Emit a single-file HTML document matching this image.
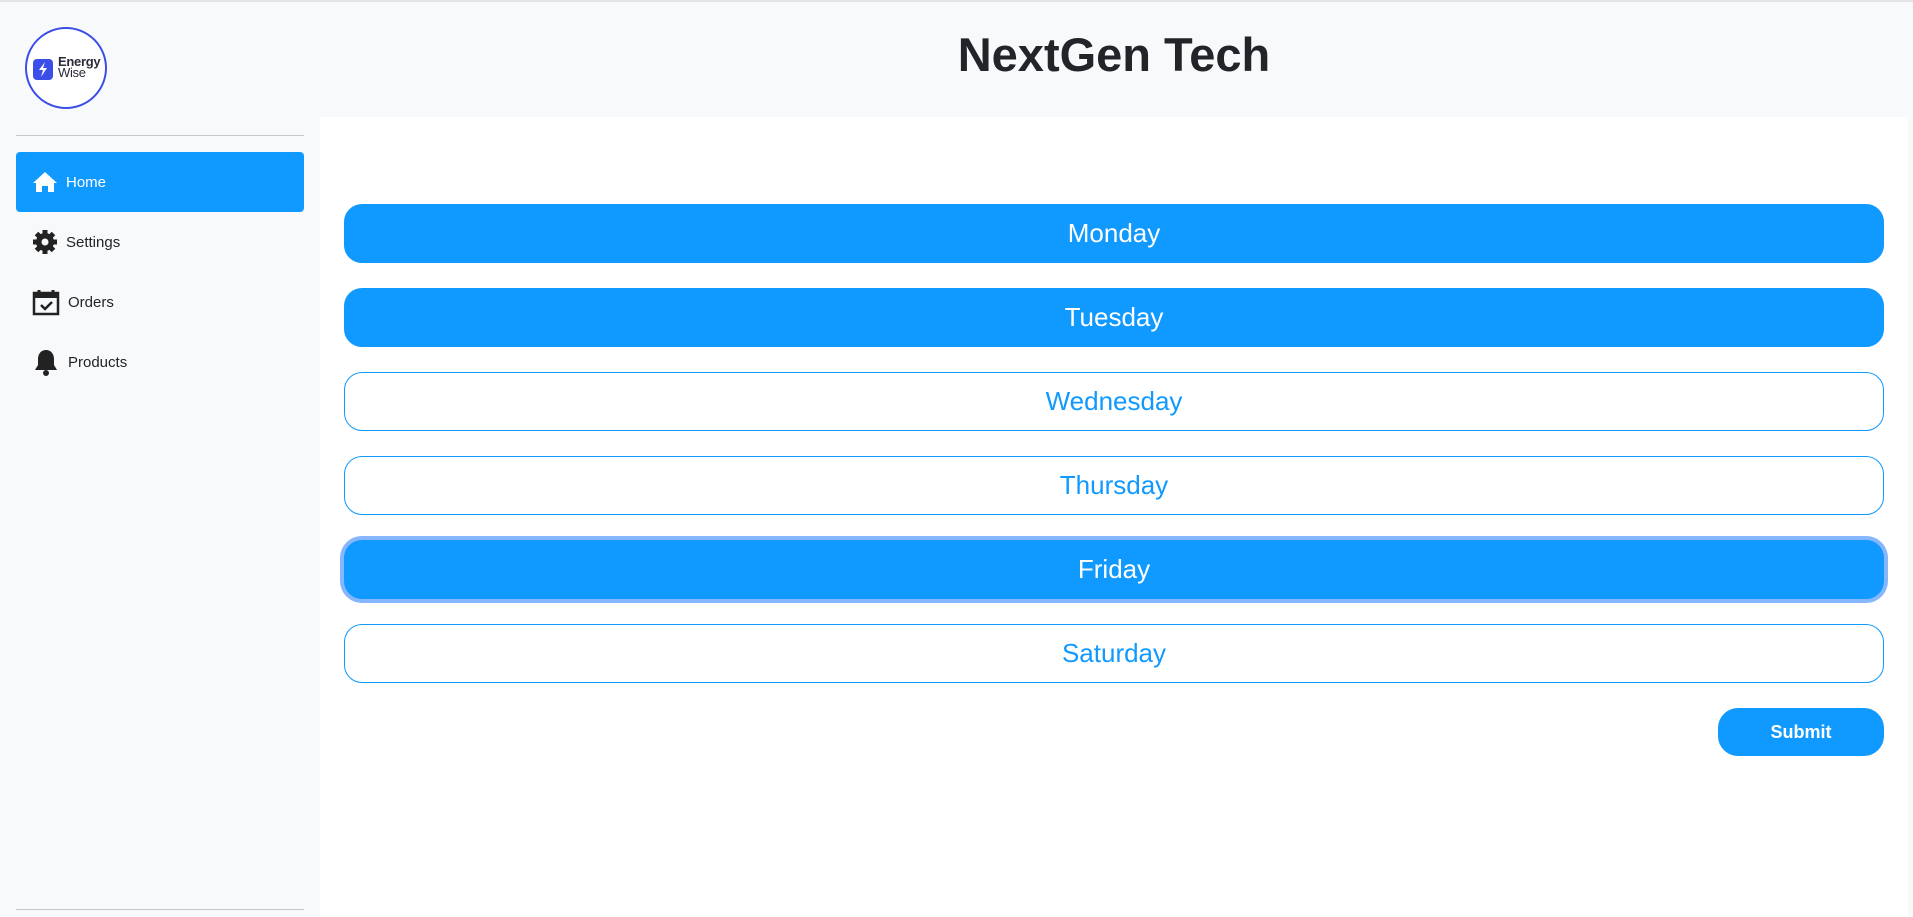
<!DOCTYPE html>
<html><head><meta charset="utf-8"><style>
*{box-sizing:border-box;margin:0;padding:0}
body{width:1913px;height:917px;background:#f8f9fa;font-family:"Liberation Sans","DejaVu Sans",sans-serif;position:relative;overflow:hidden}
.topline{position:absolute;left:0;top:0;width:1913px;height:2px;background:#e3e3e3}
.main{position:absolute;left:320px;top:117px;width:1588px;height:800px;background:#fff}
h1{position:absolute;left:320px;width:1588px;top:27px;text-align:center;font-size:47px;font-weight:bold;color:#212529}
.logo{position:absolute;left:25px;top:27px;width:82px;height:82px;border:2.5px solid #3b4ee8;border-radius:50%;background:#fff}
.hr{position:absolute;left:16px;width:288px;height:1px;background:#c8c8c8}
.nav{position:absolute;left:16px;width:288px;height:60px;border-radius:4px;font-size:15px;color:#212529;display:flex;align-items:center;padding-left:16px}
.nav.act{background:#1099ff;color:#fff}
.nav svg{margin-right:8px}
.day{position:absolute;left:344px;width:1540px;height:59px;border-radius:18px;border:1px solid #1099ff;color:#1099ff;font-size:26px;display:flex;align-items:center;justify-content:center;background:#fff}
.day.on{background:#1099ff;color:#fff}
.sub{position:absolute;left:1718px;top:708px;width:166px;height:48px;border-radius:20px;background:#1099ff;color:#fff;font-weight:bold;font-size:18px;display:flex;align-items:center;justify-content:center}
</style></head><body>
<div class="topline"></div>
<h1>NextGen Tech</h1>
<div class="logo">
<div style="position:absolute;left:6px;top:30px;width:20px;height:21px;background:#3b4ee8;border-radius:4px"></div>
<svg style="position:absolute;left:9px;top:32px" width="14" height="17" viewBox="0 0 14 17"><path d="M9 1 L3 9 H7 L5 16 L11 7 H7 Z" fill="#fff"/></svg>
<div style="position:absolute;left:31px;top:27px;font-size:13px;line-height:11px;color:#2a2a3a;font-weight:bold;letter-spacing:-0.3px">Energy<br><span style="font-weight:normal">Wise</span></div>
</div>
<div class="hr" style="top:135px"></div>
<div class="hr" style="top:909px"></div>
<div class="nav act" style="top:152px"><svg width="26" height="22" viewBox="0 0 26 22"><path d="M13 1 L1 12 L4 12 L4 21 L10 21 L10 15 L16 15 L16 21 L22 21 L22 12 L25 12 Z" fill="#fff"/></svg>Home</div>
<div class="nav" style="top:212px"><svg width="26" height="26" viewBox="0 0 26 26"><circle cx="13" cy="13" r="9" fill="#222"/><g stroke="#222" stroke-width="5"><path d="M13 1v24M1 13h24M4.5 4.5l17 17M21.5 4.5l-17 17"/></g><circle cx="13" cy="13" r="3.5" fill="#f8f9fa"/></svg>Settings</div>
<div class="nav" style="top:272px"><svg width="28" height="28" viewBox="0 0 28 28"><rect x="2" y="5" width="24" height="21" fill="none" stroke="#222" stroke-width="2.5"/><rect x="2" y="5" width="24" height="5" fill="#222"/><path d="M7 2v6M21 2v6" stroke="#222" stroke-width="3"/><path d="M9 17l4 4 7-7" fill="none" stroke="#222" stroke-width="2.5"/></svg>Orders</div>
<div class="nav" style="top:332px"><svg width="28" height="28" viewBox="0 0 28 28"><path d="M14 2c-5 0-8 4-8 9v6l-3 5h22l-3-5v-6c0-5-3-9-8-9z" fill="#222"/><circle cx="14" cy="25" r="3" fill="#222"/></svg>Products</div>
<div class="main"></div>
<div class="day on" style="top:204px">Monday</div>
<div class="day on" style="top:288px">Tuesday</div>
<div class="day" style="top:372px">Wednesday</div>
<div class="day" style="top:456px">Thursday</div>
<div class="day on" style="top:540px;box-shadow:0 0 0 4px #86b7fe">Friday</div>
<div class="day" style="top:624px">Saturday</div>
<div class="sub">Submit</div>
</body></html>
